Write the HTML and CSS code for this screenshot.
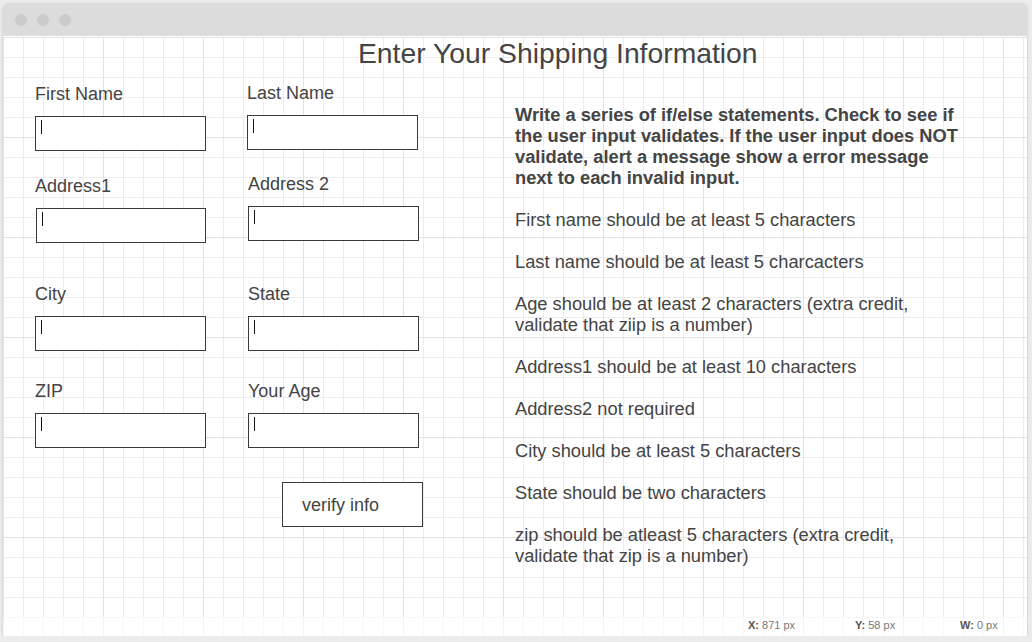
FILE: index.html
```html
<!DOCTYPE html>
<html lang="en">
<head>
<meta charset="utf-8">
<title>Shipping Information</title>
<link rel="stylesheet" href="styles.css">
</head>
<body>
<div class="window">
  <div class="titlebar">
    <span class="dot"></span><span class="dot"></span><span class="dot"></span>
  </div>
  <div class="canvas">
    <h1 class="title">Enter Your Shipping Information</h1>
    <div class="main">
      <div class="form">
        <div class="row row-1">
          <div class="field">
            <div class="label">First Name</div>
            <div class="box"><span class="caret"></span></div>
          </div>
          <div class="field up-1">
            <div class="label">Last Name</div>
            <div class="box"><span class="caret"></span></div>
          </div>
        </div>
        <div class="row row-2">
          <div class="field">
            <div class="label">Address1</div>
            <div class="box shift-1"><span class="caret"></span></div>
          </div>
          <div class="field up-2">
            <div class="label">Address 2</div>
            <div class="box"><span class="caret"></span></div>
          </div>
        </div>
        <div class="row row-3">
          <div class="field">
            <div class="label">City</div>
            <div class="box"><span class="caret"></span></div>
          </div>
          <div class="field">
            <div class="label">State</div>
            <div class="box"><span class="caret"></span></div>
          </div>
        </div>
        <div class="row row-4">
          <div class="field">
            <div class="label">ZIP</div>
            <div class="box"><span class="caret"></span></div>
          </div>
          <div class="field">
            <div class="label">Your Age</div>
            <div class="box"><span class="caret"></span></div>
          </div>
        </div>
        <div class="button">verify info</div>
      </div>
      <div class="notes">
        <p class="intro">Write a series of if/else statements. Check to see if the user input validates. If the user input does NOT validate, alert a message show a error message next to each invalid input.</p>
        <p>First name should be at least 5 characters</p>
        <p>Last name should be at least 5 charcacters</p>
        <p>Age should be at least 2 characters (extra credit, validate that ziip is a number)</p>
        <p>Address1 should be at least 10 characters</p>
        <p>Address2 not required</p>
        <p>City should be at least 5 characters</p>
        <p>State should be two characters</p>
        <p>zip should be atleast 5 characters (extra credit, validate that zip is a number)</p>
      </div>
    </div>
    <div class="status">
      <span class="stat stat-x"><b>X:</b> 871 px</span>
      <span class="stat stat-y"><b>Y:</b> 58 px</span>
      <span class="stat"><b>W:</b> 0 px</span>
    </div>
  </div>
</div>
</body>
</html>
```
FILE: styles.css
```css
html, body {
  margin: 0;
  padding: 0;
}
body {
  background: #ececec;
  font-family: "Liberation Sans", Arial, sans-serif;
  color: #444;
}
.window {
  margin: 3px 5px 0 3px;
  height: 633px;
  background: #fff;
  border-radius: 5px 5px 0 0;
  box-shadow: 0 1px 3px rgba(0,0,0,0.18);
  overflow: hidden;
}
.titlebar {
  height: 33px;
  background: #dcdcdc;
  display: flex;
  align-items: center;
  gap: 10px;
  padding-left: 12px;
  box-sizing: border-box;
}
.dot {
  width: 12px;
  height: 12px;
  border-radius: 50%;
  background: #cbcbcb;
}
.canvas {
  position: relative;
  height: 600px;
  background-color: #fff;
  background-image:
    linear-gradient(to right, #e2e2e2 1px, transparent 1px),
    linear-gradient(to bottom, #e2e2e2 1px, transparent 1px),
    linear-gradient(to right, #ececec 1px, transparent 1px),
    linear-gradient(to bottom, #ececec 1px, transparent 1px);
  background-size: 100px 100px, 100px 100px, 20px 20px, 20px 20px;
}
.title {
  margin: 1px 0 0 355px;
  font-size: 28.3px;
  line-height: 32px;
  font-weight: normal;
  color: #444;
}
.main {
  display: flex;
}
.form {
  padding-left: 32px;
  width: 440px;
}
.row {
  display: flex;
  align-items: flex-start;
  gap: 42px;
}
.row-1 { margin-top: 15px; gap: 41px; }
.row-2 { margin-top: 25px; }
.row-3 { margin-top: 41px; }
.row-4 { margin-top: 30px; }
.field {
  width: 171px;
}
.up-1 { margin-top: -1px; }
.up-2 { margin-top: -2px; }
.label {
  font-size: 18px;
  line-height: 21px;
  color: #444;
}
.box {
  margin-top: 11px;
  height: 35px;
  border: 1px solid #3a3a3a;
  box-sizing: border-box;
  background: #fff;
  padding: 3px 0 0 5px;
}
.shift-1 { margin-left: 1px; }
.caret {
  display: block;
  width: 1px;
  height: 14px;
  background: #111;
}
.button {
  margin: 34px 0 0 247px;
  width: 141px;
  height: 45px;
  box-sizing: border-box;
  border: 1px solid #3a3a3a;
  background: #fff;
  display: flex;
  align-items: center;
  padding: 2px 0 0 19px;
  font-size: 18px;
  line-height: 21px;
  color: #444;
}
.notes {
  margin-left: 40px;
  padding-top: 35px;
  width: 445px;
}
.notes p {
  margin: 0 0 21px;
  font-size: 18.3px;
  line-height: 21px;
  color: #444;
}
.notes .intro {
  font-weight: bold;
}
.status {
  position: absolute;
  left: 0;
  right: 0;
  bottom: 0;
  height: 20px;
  background: rgba(255,255,255,0.6);
  display: flex;
  align-items: center;
  padding: 0 0 4px 745px;
  box-sizing: border-box;
  font-size: 11px;
  color: #777;
}
.stat b {
  color: #555;
}
.stat-x { width: 107px; }
.stat-y { width: 105px; }
```
